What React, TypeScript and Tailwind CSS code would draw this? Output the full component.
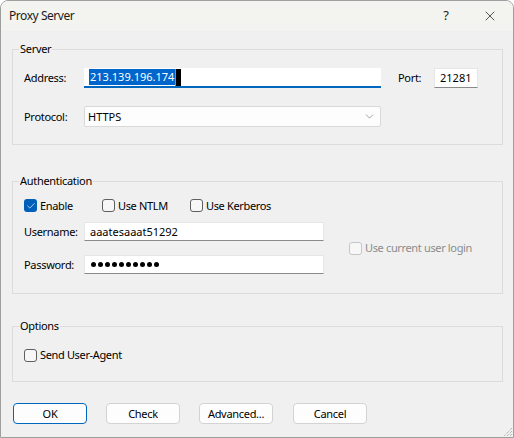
import React from "react";
import { X, ChevronDown, Check } from "lucide-react";

const font = { fontFamily: '"Noto Sans", "Segoe UI", sans-serif' };

function GroupBox({
  title,
  className,
  children,
}: {
  title: string;
  className?: string;
  children: React.ReactNode;
}) {
  return (
    <div className={"relative ml-[11px] w-[491px] border border-[#dcdcdc] " + (className ?? "")}>
      <span className="absolute left-[6px] top-[-9px] bg-[#f0f0f0] px-[1px] text-[11px] leading-[16px] tracking-[-0.3px] text-black">
        {title}
      </span>
      {children}
    </div>
  );
}

function CheckBox({
  checked,
  disabled,
  label,
}: {
  checked?: boolean;
  disabled?: boolean;
  label: string;
}) {
  return (
    <label className="flex items-center gap-[3px]">
      {checked ? (
        <span className="flex h-[13px] w-[13px] items-center justify-center rounded-[3px] bg-[#005fb8]">
          <Check size={10} strokeWidth={1.6} color="#fff" />
        </span>
      ) : (
        <span
          className={
            "h-[13px] w-[13px] rounded-[3px] border bg-[#f7f7f7] " +
            (disabled ? "border-[#c5c5c5]" : "border-[#5f5f5f]")
          }
        />
      )}
      <span
        className={
          "text-[11px] leading-[16px] tracking-[-0.35px] " + (disabled ? "text-[#8c8c8c]" : "text-black")
        }
      >
        {label}
      </span>
    </label>
  );
}

function TextBox({ className, children }: { className?: string; children?: React.ReactNode }) {
  return (
    <div
      className={
        "flex items-center border border-[#e6e6e6] border-b-[#8a8a8a] bg-white pl-[5px] text-[11px] leading-[16px] text-black " +
        (className ?? "")
      }
    >
      {children}
    </div>
  );
}

function Label({ children }: { children: React.ReactNode }) {
  return <span className="w-[60px] text-[11px] leading-[16px] tracking-[-0.3px] text-black">{children}</span>;
}

function Button({ label, primary }: { label: string; primary?: boolean }) {
  return (
    <button
      className={
        "flex h-[21px] w-[74px] items-center justify-center rounded-[4px] border bg-[#fdfdfd] text-[11px] leading-[16px] tracking-[-0.3px] text-black " +
        (primary ? "border-[#0067c0]" : "border-[#d3d3d3]")
      }
    >
      {label}
    </button>
  );
}

const dots = Array.from({ length: 10 });

export default function App() {
  return (
    <div className="h-[438px] w-[514px] bg-white" style={font}>
      <div className="relative flex h-[438px] w-[514px] flex-col overflow-hidden rounded-t-[8px] border border-[#9e9e9e] bg-[#f0f0f0]">
        {/* title bar */}
        <div className="flex h-[30px] shrink-0 items-center bg-[#f3f3ef] pl-[8px] text-[12px] text-[#1b1b1b]">
          <span className="tracking-[-0.45px]">Proxy Server</span>
          <span className="ml-auto mr-[33px] text-[13px]">?</span>
          <X size={16} strokeWidth={1.1} className="mr-[15px] text-[#1b1b1b]" />
        </div>

        {/* Server */}
        <GroupBox title="Server" className="mt-[18px] h-[96px] px-[11px] pt-[18px]">
          <div className="flex h-[20px] items-center">
            <Label>Address:</Label>
            <div className="flex h-[20px] w-[297px] items-center border-b-2 border-[#0067c0] bg-white pl-[5px] text-[11px] leading-[16px]">
              <span className="bg-[#0066cc] px-[1px] text-white">213.139.196.174</span>
              <span className="h-[17px] w-[6px] border-l border-[#ff6a00] bg-black" />
            </div>
            <span className="ml-[17px] w-[36px] text-[11px] leading-[16px] tracking-[-0.3px] text-black">Port:</span>
            <TextBox className="h-[20px] w-[44px]">21281</TextBox>
          </div>
          <div className="mt-[18px] flex h-[21px] items-center">
            <Label>Protocol:</Label>
            <div className="flex h-[21px] w-[297px] items-center rounded-[2px] border border-[#d9d9d9] bg-[#fdfdfd] pl-[3px] pr-[4px] text-[11px] leading-[16px] text-black">
              <span>HTTPS</span>
              <ChevronDown size={13} strokeWidth={1} className="ml-auto text-[#5a5a5a]" />
            </div>
          </div>
        </GroupBox>

        {/* Authentication */}
        <GroupBox title="Authentication" className="mt-[36px] h-[113px] px-[11px] pt-[16px]">
          <div className="flex h-[15px] items-center">
            <div className="w-[78px]">
              <CheckBox checked label="Enable" />
            </div>
            <div className="w-[88px]">
              <CheckBox label="Use NTLM" />
            </div>
            <CheckBox label="Use Kerberos" />
          </div>
          <div className="mt-[9px] flex items-center">
            <div className="flex flex-col">
              <div className="flex h-[19px] items-center">
                <Label>Username:</Label>
                <TextBox className="h-[19px] w-[240px]">aaatesaaat51292</TextBox>
              </div>
              <div className="mt-[14px] flex h-[19px] items-center">
                <Label>Password:</Label>
                <TextBox className="h-[19px] w-[240px] gap-[2px] pl-[6px]">
                  {dots.map((_, i) => (
                    <span key={i} className="h-[5px] w-[5px] rounded-full bg-black" />
                  ))}
                </TextBox>
              </div>
            </div>
            <div className="ml-[25px]">
              <CheckBox disabled label="Use current user login" />
            </div>
          </div>
        </GroupBox>

        {/* Options */}
        <GroupBox title="Options" className="mt-[32px] h-[56px] px-[11px] pt-[20px]">
          <CheckBox label="Send User-Agent" />
        </GroupBox>

        {/* buttons */}
        <div className="ml-[12px] mt-[21px] flex gap-[19px]">
          <Button label="OK" primary />
          <Button label="Check" />
          <Button label="Advanced..." />
          <div className="ml-[1px]">
            <Button label="Cancel" />
          </div>
        </div>

        {/* size grip */}
        <svg className="absolute bottom-0 right-0" width="12" height="12" viewBox="0 0 12 12">
          <path d="M11 3 L3 11 M11 6 L6 11 M11 9 L9 11" stroke="#a0a0a0" strokeWidth="1" strokeDasharray="1 1" />
        </svg>
      </div>
    </div>
  );
}
